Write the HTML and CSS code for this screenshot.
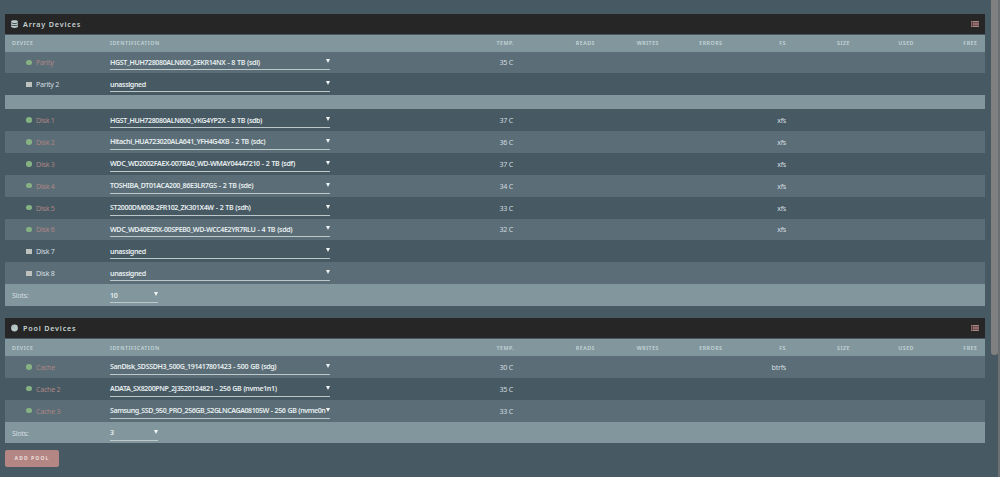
FILE: index.html
```
<!DOCTYPE html>
<html lang="en">
<head>
  <meta charset="UTF-8">
  <meta name="viewport" content="width=device-width, initial-scale=1.0">
  <title>Main</title>
  <link rel="stylesheet" href="styles.css">
</head>
<body>
  <main class="page">
    <section class="panel">
      <div class="title">
        <svg class="icon" viewBox="0 0 7 8"><path d="M0 1.4C0-.3 7-.3 7 1.4V2C7 3.3 0 3.3 0 2zM0 2.9c1.6 1 5.4 1 7 0v1.4c0 1.3-7 1.3-7 0zM0 5.2c1.6 1 5.4 1 7 0v1.4c0 1.8-7 1.8-7 0z"/></svg>
        <span>Array Devices</span>
        <svg class="list" viewBox="0 0 8 6"><path d="M0 0h1.6v1.6H0zM2 0h6v1.6H2zM0 2.2h1.6v1.6H0zM2 2.2h6v1.6H2zM0 4.4h1.6V6H0zM2 4.4h6V6H2z"/></svg>
      </div>
      <div class="row head"><span>Device</span><span>Identification</span><span>Temp.</span><span>Reads</span><span>Writes</span><span>Errors</span><span>FS</span><span>Size</span><span>Used</span><span>Free</span></div>
      <div class="row light"><span class="device"><i class="orb"></i><a>Parity</a></span><div class="select"><span>HGST_HUH728080ALN600_2EKR14NX - 8 TB (sdi)</span></div><span>35 C</span></div>
      <div class="row"><span class="device"><i class="square"></i>Parity 2</span><div class="select"><span>unassigned</span></div></div>
      <div class="spacer"></div>
      <div class="row"><span class="device"><i class="orb"></i><a>Disk 1</a></span><div class="select"><span>HGST_HUH728080ALN600_VKG4YP2X - 8 TB (sdb)</span></div><span>37 C</span><span class="fs">xfs</span></div>
      <div class="row light"><span class="device"><i class="orb"></i><a>Disk 2</a></span><div class="select"><span>Hitachi_HUA723020ALA641_YFH4G4XB - 2 TB (sdc)</span></div><span>36 C</span><span class="fs">xfs</span></div>
      <div class="row"><span class="device"><i class="orb"></i><a>Disk 3</a></span><div class="select"><span>WDC_WD2002FAEX-007BA0_WD-WMAY04447210 - 2 TB (sdf)</span></div><span>37 C</span><span class="fs">xfs</span></div>
      <div class="row light"><span class="device"><i class="orb"></i><a>Disk 4</a></span><div class="select"><span>TOSHIBA_DT01ACA200_86E3LR7GS - 2 TB (sde)</span></div><span>34 C</span><span class="fs">xfs</span></div>
      <div class="row"><span class="device"><i class="orb"></i><a>Disk 5</a></span><div class="select"><span>ST2000DM008-2FR102_ZK301X4W - 2 TB (sdh)</span></div><span>33 C</span><span class="fs">xfs</span></div>
      <div class="row light"><span class="device"><i class="orb"></i><a>Disk 6</a></span><div class="select"><span>WDC_WD40EZRX-00SPEB0_WD-WCC4E2YR7RLU - 4 TB (sdd)</span></div><span>32 C</span><span class="fs">xfs</span></div>
      <div class="row"><span class="device"><i class="square"></i>Disk 7</span><div class="select"><span>unassigned</span></div></div>
      <div class="row light"><span class="device"><i class="square"></i>Disk 8</span><div class="select"><span>unassigned</span></div></div>
      <div class="row slots"><span>Slots:</span><div class="select narrow"><span>10</span></div></div>
    </section>

    <section class="panel">
      <div class="title">
        <svg class="icon" viewBox="0 0 7 8"><circle cx="3.5" cy="4" r="3.4"/><path class="shine" d="M1.2 4A2.3 2.3 0 0 1 3.5 1.7M3.5 3.5v1"/></svg>
        <span>Pool Devices</span>
        <svg class="list" viewBox="0 0 8 6"><path d="M0 0h1.6v1.6H0zM2 0h6v1.6H2zM0 2.2h1.6v1.6H0zM2 2.2h6v1.6H2zM0 4.4h1.6V6H0zM2 4.4h6V6H2z"/></svg>
      </div>
      <div class="row head"><span>Device</span><span>Identification</span><span>Temp.</span><span>Reads</span><span>Writes</span><span>Errors</span><span>FS</span><span>Size</span><span>Used</span><span>Free</span></div>
      <div class="row light"><span class="device"><i class="orb"></i><a>Cache</a></span><div class="select"><span>SanDisk_SDSSDH3_500G_191417801423 - 500 GB (sdg)</span></div><span>30 C</span><span class="fs">btrfs</span></div>
      <div class="row"><span class="device"><i class="orb"></i><a>Cache 2</a></span><div class="select"><span>ADATA_SX8200PNP_2J3520124821 - 256 GB (nvme1n1)</span></div><span>35 C</span></div>
      <div class="row light"><span class="device"><i class="orb"></i><a>Cache 3</a></span><div class="select long"><span>Samsung_SSD_950_PRO_256GB_S2GLNCAGA08105W - 256 GB (nvme0n</span></div><span>33 C</span></div>
      <div class="row slots"><span>Slots:</span><div class="select narrow"><span>3</span></div></div>
    </section>
    <button class="add">Add Pool</button>
  </main>
  <div class="scrollbar"><div class="thumb"></div></div>
</body>
</html>
```
FILE: styles.css
```
* { margin: 0; padding: 0; box-sizing: border-box; }
body {
  display: flex;
  width: 1000px;
  height: 477px;
  overflow: hidden;
  background: #475963;
  color: #d3dde0;
  font-family: "Noto Sans", sans-serif;
  font-size: 7.1px;
  letter-spacing: -.25px;
}
.page {
  width: 991px;
  padding: 14px 6px 0 5px;
}
.panel {
  margin-bottom: 12.3px;
}
.title {
  display: flex;
  align-items: center;
  height: 20px;
  margin-bottom: 1px;
  padding: 0 6px 1px 5.5px;
  background: #262626;
  color: #c5d3d3;
  font-size: 7.2px;
  font-weight: 600;
  letter-spacing: .8px;
}
.icon {
  width: 7px;
  height: 8px;
  margin-right: 5.5px;
  fill: #b9cac9;
}
.shine {
  fill: none;
  stroke: #8fa1a0;
  stroke-width: .6;
}
.list {
  width: 8px;
  height: 6px;
  margin-left: auto;
  fill: #b08280;
}
.row {
  display: grid;
  grid-template-columns: 98px 220px 183px 82px 64px 63.5px 63.5px 64px 64px 63.5px;
  align-items: center;
  height: 21.9px;
  padding-left: 7px;
}
.row > span:nth-child(n+3) {
  text-align: right;
}
.row > .fs {
  grid-column: 7;
}
.head {
  height: 16.5px;
  background: #82979d;
  color: #c5d6d9;
  font-size: 5.3px;
  font-weight: 600;
  letter-spacing: .5px;
  text-transform: uppercase;
}
.head span:nth-child(3) {
  padding-right: 0;
  margin-right: -1px;
}
.light {
  background: #5b6d77;
}
.slots {
  background: #82979d;
}
.spacer {
  height: 13.8px;
  background: #82979d;
}
.device {
  display: flex;
  align-items: center;
  padding-left: 14px;
}
.device a {
  color: #ac8684;
}
.orb, .square {
  width: 5.5px;
  height: 5.5px;
  margin-right: 4.5px;
  background: #86b283;
  border-radius: 50%;
}
.square {
  background: #bfc1bf;
  border-radius: 0;
}
.select {
  display: flex;
  align-items: center;
  width: 220px;
  height: 16px;
  border-bottom: 1px solid #bdc8cb;
  color: #e6edee;
  font-weight: 600;
  letter-spacing: -.39px;
  word-spacing: .6px;
}
.select span {
  flex: 1;
  min-width: 0;
  white-space: nowrap;
}
.select::after {
  content: "";
  margin-top: -1px;
  border: 2.5px solid transparent;
  border-top: 4.5px solid #f2f5f5;
  border-bottom: 0;
}
.long {
  letter-spacing: -.45px;
}
.narrow {
  width: 48px;
}
.add {
  display: block;
  width: 54px;
  height: 17px;
  margin-top: -6px;
  border: 0;
  border-radius: 2px;
  background: #b48683;
  color: #e5d6d5;
  font: 800 5px "Noto Sans", sans-serif;
  letter-spacing: 1.1px;
  text-transform: uppercase;
}
.scrollbar {
  width: 9px;
  height: 477px;
  border-right: 2px solid #6d7072;
}
.thumb {
  width: 6.5px;
  height: 355px;
  background: #808080;
  border-radius: 0 0 3px 3px;
}
```
